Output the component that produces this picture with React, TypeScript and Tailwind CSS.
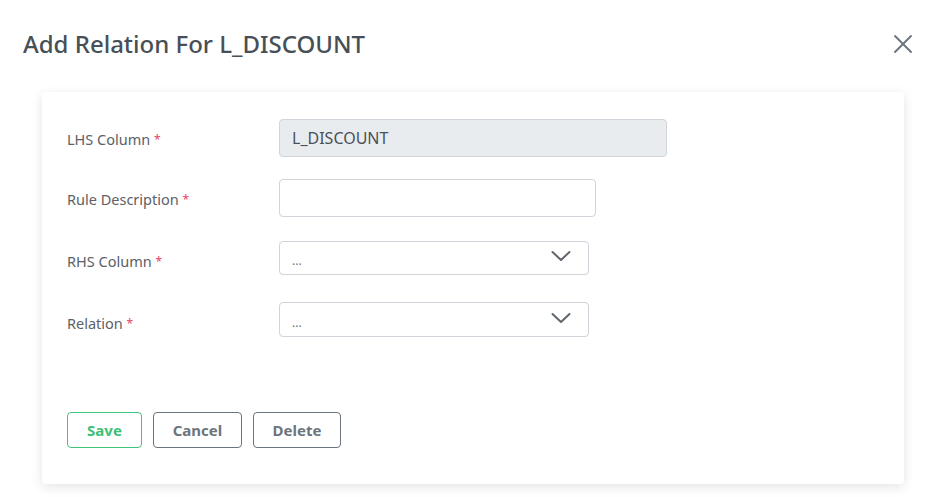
import { X } from "lucide-react";

// ── Types ─────────────────────────────────────────────────────────────────────

type Field = {
  label: string;
  kind: "readonly" | "text" | "select";
  value?: string;
  width: string;
  height: string;
  gap: string;
  nudge: string;
};

const FIELDS: Field[] = [
  { label: "LHS Column", kind: "readonly", value: "L_DISCOUNT", width: "w-[388px]", height: "h-[38px]", gap: "mt-0", nudge: "translate-y-[2px]" },
  { label: "Rule Description", kind: "text", width: "w-[317px]", height: "h-[38px]", gap: "mt-[22px]", nudge: "translate-y-[2px]" },
  { label: "RHS Column", kind: "select", value: "...", width: "w-[310px]", height: "h-[34px]", gap: "mt-[24px]", nudge: "translate-y-[4px]" },
  { label: "Relation", kind: "select", value: "...", width: "w-[310px]", height: "h-[35px]", gap: "mt-[27px]", nudge: "translate-y-[4px]" },
];

// ── Component ─────────────────────────────────────────────────────────────────

export default function App() {
  return (
    <div
      className="w-[927px] h-[497px] bg-white overflow-hidden"
      style={{ fontFamily: '"Noto Sans", "Open Sans", sans-serif' }}
    >
      {/* ── Header ── */}
      <div className="flex items-center justify-between pl-[23px] pr-[8px] h-[89px] pb-[2px]">
        <h1 className="text-[24px] leading-8 font-medium text-[#474f57] tracking-[0px]">
          Add Relation For L_DISCOUNT
        </h1>
        <button className="text-[#6c757d]">
          <X size={32} strokeWidth={1.4} />
        </button>
      </div>

      {/* ── Card ── */}
      <div className="ml-[42px] mr-[23px] mt-[3px] rounded bg-white shadow-[0_3px_12px_rgba(0,0,0,0.11)] pl-[25px] pt-[27px] pb-[36px]">
        {FIELDS.map((f) => (
          <div key={f.label} className={`flex items-center ${f.gap}`}>
            <div className={`w-[212px] text-[14.5px] text-[#5c6166] ${f.nudge}`}>
              {f.label} <span className="text-[12px] text-[#e5436a] relative -top-[1px]">*</span>
            </div>
            {f.kind === "readonly" && (
              <div className={`${f.width} ${f.height} flex items-center px-3 rounded border border-[#ced4da] bg-[#e9ecef] text-[16px] text-[#495057]`}>
                {f.value}
              </div>
            )}
            {f.kind === "text" && (
              <div className={`${f.width} ${f.height} rounded border border-[#ced4da] bg-white`} />
            )}
            {f.kind === "select" && (
              <div className={`${f.width} ${f.height} flex items-center justify-between pl-3 pr-[17px] rounded border border-[#ced4da] bg-white`}>
                <span className="text-[12px] text-[#6c757d] translate-y-[3px]">{f.value}</span>
                <svg width="20" height="12" viewBox="0 0 20 12" fill="none" className="text-[#5f666d] -translate-y-[2px]">
                  <polyline points="1.5,2 10,10 18.5,2" stroke="currentColor" strokeWidth="2" strokeLinecap="round" strokeLinejoin="round" />
                </svg>
              </div>
            )}
          </div>
        ))}

        {/* ── Actions row ── */}
        <div className="flex gap-[11px] mt-[75px]">
          <button className="w-[75px] h-[36px] rounded border border-[#41c57c] text-[#3dbf74] text-[15px] font-bold">
            Save
          </button>
          <button className="w-[89px] h-[36px] rounded border border-[#6c757d] text-[#6c757d] text-[15px] font-bold">
            Cancel
          </button>
          <button className="w-[88px] h-[36px] rounded border border-[#6c757d] text-[#6c757d] text-[15px] font-bold">
            Delete
          </button>
        </div>
      </div>
    </div>
  );
}
